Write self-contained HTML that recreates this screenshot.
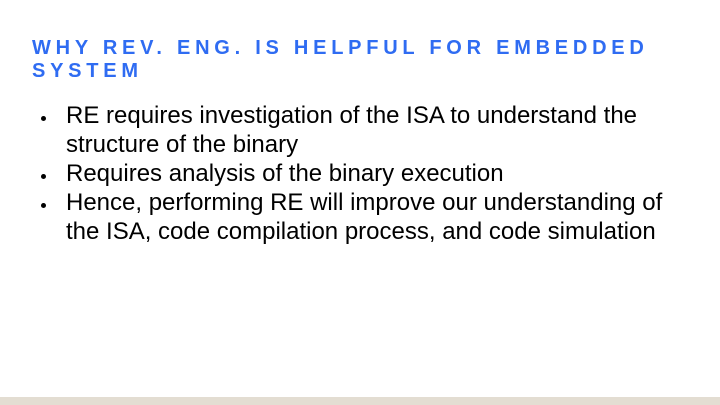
<!DOCTYPE html>
<html><head><style>
body{margin:0;width:720px;height:405px;background:#fff;position:relative;overflow:hidden;font-family:"Liberation Sans",sans-serif}
.t{position:absolute;left:32px;top:37px;color:#2f6cf2;font-weight:bold;font-size:20px;letter-spacing:4.75px;line-height:23px;white-space:nowrap}
ul{position:absolute;left:66px;top:101px;margin:0;padding:0;list-style:none;font-size:24px;line-height:29px;color:#000;width:600px}
li{position:relative}
li:before{content:"";position:absolute;left:-25px;top:15px;width:5px;height:5px;border-radius:50%;background:#000}
.b{position:absolute;left:0;top:397px;width:720px;height:8px;background:#e3ddd2}
</style></head><body>
<div class="t">WHY REV. ENG. IS HELPFUL FOR EMBEDDED<br>SYSTEM</div>
<ul>
<li>RE requires investigation of the ISA to understand the structure of the binary</li>
<li>Requires analysis of the binary execution</li>
<li>Hence, performing RE will improve our understanding of the ISA, code compilation process, and code simulation</li>
</ul>
<div class="b"></div>
</body></html>
